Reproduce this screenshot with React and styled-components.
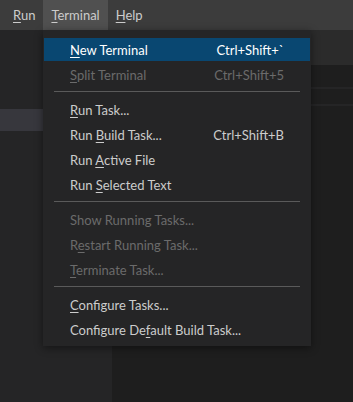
import React from 'react';
import styled, { createGlobalStyle } from 'styled-components';

const Global = createGlobalStyle`
  html, body {
    margin: 0;
    padding: 0;
    background: #1e1e1e;
  }
  body {
    font-family: "Lato", "Noto Sans", sans-serif;
    font-size: 13px;
    color: #cccccc;
  }
`;

const Window = styled.div`
  position: relative;
  width: 353px;
  height: 402px;
  overflow: hidden;
  display: grid;
  grid-template-rows: 30px 1fr;
`;

const MenuBar = styled.div`
  display: flex;
  align-items: stretch;
  background: #3c3c3c;
  padding-left: 5px;
`;

const MenuTitle = styled.div`
  display: flex;
  align-items: center;
  padding: 0 8px;
  color: #cccccc;
  background: ${(p) => (p.$open ? '#505050' : 'transparent')};
`;

const Workbench = styled.div`
  display: flex;
  min-height: 0;
`;

const Sidebar = styled.div`
  width: 112px;
  background: #252526;
  padding-top: 79px;
`;

const SideRow = styled.div`
  height: 22px;
  background: ${(p) => (p.$selected ? '#37373d' : 'transparent')};
`;

const Editor = styled.div`
  flex: 1;
  display: flex;
  flex-direction: column;
  background: #1e1e1e;
`;

const TabBar = styled.div`
  height: 35px;
  background: #2b2b2b;
`;

const Strip = styled.div`
  height: ${(p) => p.$h}px;
  border-bottom: 2px solid #252526;
`;

const Menu = styled.div`
  position: absolute;
  top: 30px;
  left: 43px;
  width: 268px;
  box-sizing: border-box;
  background: #252526;
  padding: 7px 0 4px;
  box-shadow: 0 2px 8px rgba(0, 0, 0, 0.45);
`;

const Item = styled.div`
  border: 1px solid transparent;
`;

const ItemLabel = styled.div`
  height: 23px;
  display: flex;
  align-items: center;
  justify-content: space-between;
  padding: 0 26px;
  background: ${(p) => (p.$active ? '#094771' : 'transparent')};
  color: ${(p) => (p.$active ? '#ffffff' : p.$disabled ? '#6b6b6b' : '#cccccc')};
  white-space: nowrap;
`;

const Separator = styled.div`
  margin: 4px 11px 5px;
  height: 1px;
  background: #5a5a5a;
`;

const Mn = styled.span`
  text-decoration: underline;
  text-underline-offset: 2px;
`;

const Label = ({ text, mn }) => {
  if (mn === undefined) return <span>{text}</span>;
  return (
    <span>
      {text.slice(0, mn)}
      <Mn>{text[mn]}</Mn>
      {text.slice(mn + 1)}
    </span>
  );
};

const groups = [
  [
    { text: 'New Terminal', mn: 0, key: 'Ctrl+Shift+`', active: true },
    { text: 'Split Terminal', mn: 0, key: 'Ctrl+Shift+5', disabled: true },
  ],
  [
    { text: 'Run Task...', mn: 0 },
    { text: 'Run Build Task...', mn: 4, key: 'Ctrl+Shift+B' },
    { text: 'Run Active File', mn: 4 },
    { text: 'Run Selected Text', mn: 4 },
  ],
  [
    { text: 'Show Running Tasks...', disabled: true },
    { text: 'Restart Running Task...', mn: 1, disabled: true },
    { text: 'Terminate Task...', mn: 0, disabled: true },
  ],
  [
    { text: 'Configure Tasks...', mn: 0 },
    { text: 'Configure Default Build Task...', mn: 12 },
  ],
];

export default function App() {
  return (
    <Window>
      <Global />
      <MenuBar>
        <MenuTitle><Label text="Run" mn={0} /></MenuTitle>
        <MenuTitle $open><Label text="Terminal" mn={0} /></MenuTitle>
        <MenuTitle><Label text="Help" mn={0} /></MenuTitle>
      </MenuBar>
      <Workbench>
        <Sidebar>
          <SideRow $selected />
        </Sidebar>
        <Editor>
          <TabBar />
          <Strip $h={22} />
          <Strip $h={15} />
        </Editor>
      </Workbench>
      <Menu>
        {groups.map((g, gi) => (
          <React.Fragment key={gi}>
            {gi > 0 && <Separator />}
            {g.map((it) => (
              <Item key={it.text}>
                <ItemLabel $active={it.active} $disabled={it.disabled}>
                  <Label text={it.text} mn={it.mn} />
                  {it.key && <span>{it.key}</span>}
                </ItemLabel>
              </Item>
            ))}
          </React.Fragment>
        ))}
      </Menu>
    </Window>
  );
}
